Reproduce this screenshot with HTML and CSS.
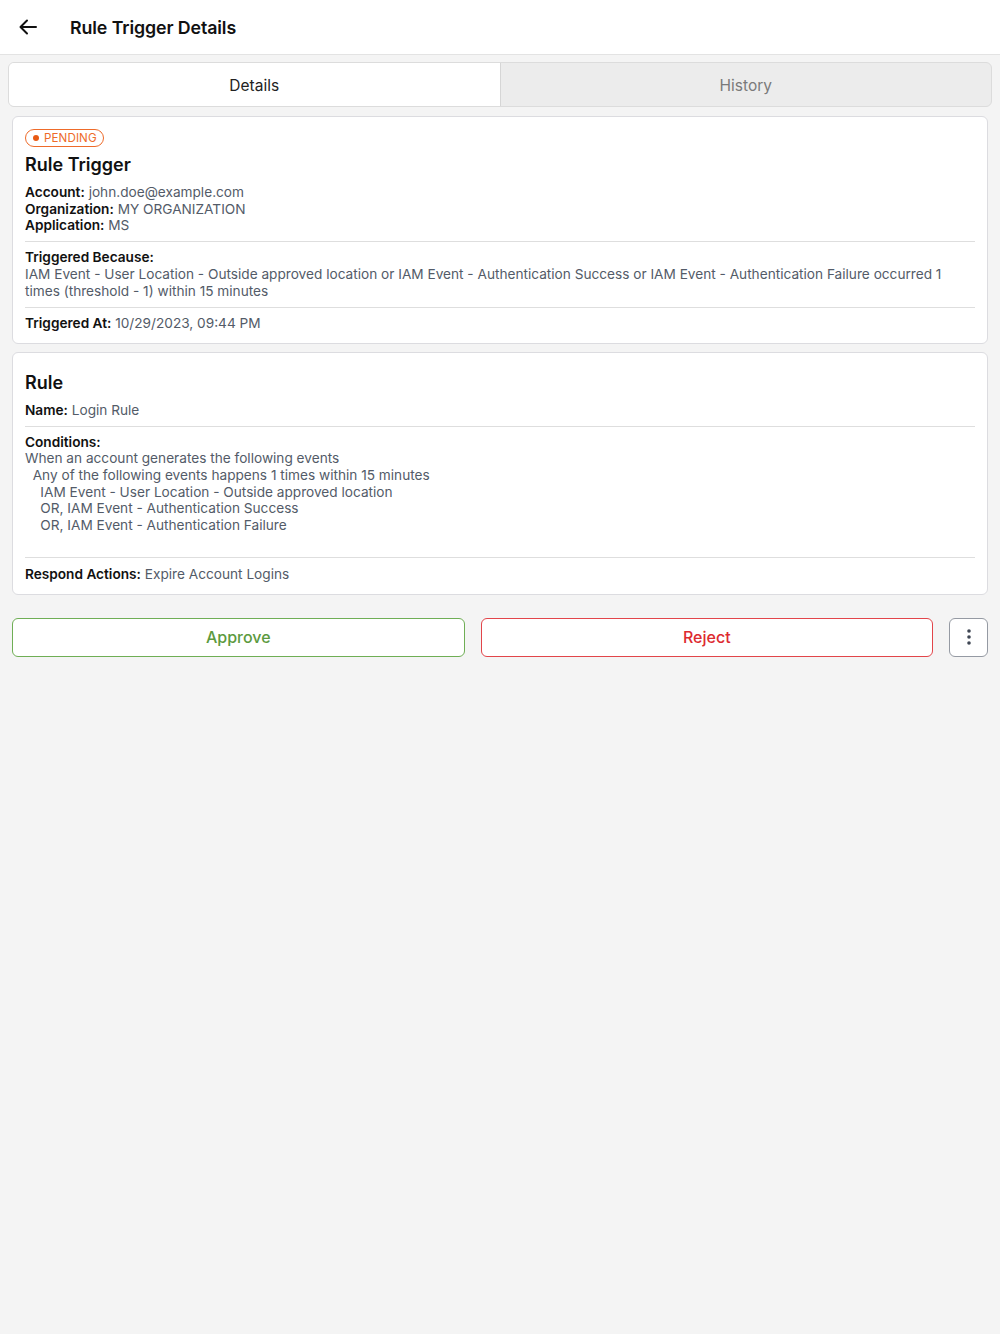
FILE: index.html
```html
<!DOCTYPE html>
<html lang="en">
<head>
<meta charset="utf-8">
<title>Rule Trigger Details</title>
<link rel="stylesheet" href="styles.css">
</head>
<body>
<header class="topbar">
  <button class="back" aria-label="Back">
    <svg width="18" height="16" viewBox="0 0 18 16" fill="none" stroke="#111" stroke-width="2" stroke-linecap="round" stroke-linejoin="round"><path d="M17 8H2M8 1.5L1.5 8 8 14.5"/></svg>
  </button>
  <h1 class="title">Rule Trigger Details</h1>
</header>
<main class="content">
  <div class="tabs">
    <div class="tab active">Details</div>
    <div class="tab">History</div>
  </div>

  <section class="card">
    <span class="badge"><span class="dot"></span>PENDING</span>
    <h2 class="card-title">Rule Trigger</h2>
    <div class="rows">
      <div><b>Account:</b> <span class="val">john.doe@example.com</span></div>
      <div><b>Organization:</b> <span class="val">MY ORGANIZATION</span></div>
      <div><b>Application:</b> <span class="val">MS</span></div>
    </div>
    <hr class="div">
    <div class="rows">
      <div><b>Triggered Because:</b></div>
      <div class="val">IAM Event - User Location - Outside approved location or IAM Event - Authentication Success or IAM Event - Authentication Failure occurred 1 times (threshold - 1) within 15 minutes</div>
    </div>
    <hr class="div div-loose-top">
    <div class="rows">
      <div><b>Triggered At:</b> <span class="val">10/29/2023, 09:44 PM</span></div>
    </div>
  </section>

  <section class="card">
    <h2 class="card-title rule-title">Rule</h2>
    <div class="rows">
      <div><b>Name:</b> <span class="val">Login Rule</span></div>
    </div>
    <hr class="div">
    <div class="rows">
      <div><b>Conditions:</b></div>
      <div class="val cond">When an account generates the following events
  Any of the following events happens 1 times within 15 minutes
    IAM Event - User Location - Outside approved location
    OR, IAM Event - Authentication Success
    OR, IAM Event - Authentication Failure</div>
    </div>
    <hr class="div div-loose-bottom">
    <div class="rows">
      <div><b>Respond Actions:</b> <span class="val">Expire Account Logins</span></div>
    </div>
  </section>

  <div class="actions">
    <button class="btn approve">Approve</button>
    <button class="btn reject">Reject</button>
    <button class="more" aria-label="More">
      <svg width="4" height="16" viewBox="0 0 4 16" fill="#3f4654"><circle cx="2" cy="2" r="1.8"/><circle cx="2" cy="8" r="1.8"/><circle cx="2" cy="14" r="1.8"/></svg>
    </button>
  </div>
</main>
</body>
</html>
```

FILE: styles.css
```css
* { box-sizing: border-box; }
html, body { margin: 0; padding: 0; }
body {
  background: #f4f4f4;
  font-family: Inter, "Noto Sans", sans-serif;
  color: #111;
  min-height: 1334px;
}
.topbar {
  height: 55px;
  background: #fff;
  border-bottom: 1px solid #e3e3e3;
  display: flex;
  align-items: center;
  padding-left: 19px;
}
.back {
  border: 0;
  background: none;
  padding: 0;
  display: flex;
  align-items: center;
  width: 18px;
  height: 18px;
  margin-right: 33px;
}
.title {
  margin: 0;
  font-size: 17.8px;
  font-weight: 600;
  color: #111;
  letter-spacing: -0.1px;
}
.content {
  padding: 7px 8px 0;
}
.tabs {
  display: flex;
  height: 45px;
  border: 1px solid #dcdcdc;
  border-radius: 6px;
  overflow: hidden;
  background: #ececec;
}
.tab {
  flex: 1;
  display: flex;
  align-items: center;
  justify-content: center;
  font-size: 15.5px;
  color: #7a7a7a;
  padding-top: 2px;
}
.tab.active {
  background: #fff;
  color: #222;
  border-right: 1px solid #d6d6d6;
}
.card {
  margin: 9px 4px 0;
  background: #fff;
  border: 1px solid #dcdce0;
  border-radius: 6px;
  padding: 11px 12px 11px;
  font-size: 13.65px;
  line-height: 16.7px;
}
.card + .card { margin-top: 8px; }
.badge {
  display: inline-flex;
  align-items: center;
  height: 18px;
  padding: 0 6px 0 7px;
  border: 1px solid #ee6b2a;
  border-radius: 9px;
  color: #ee6b2a;
  font-size: 11.6px;
  letter-spacing: 0.1px;
}
.dot {
  width: 6px;
  height: 6px;
  border-radius: 50%;
  background: #e85a14;
  margin-right: 5px;
}
.card-title {
  margin: 7px 0 8px;
  font-size: 18px;
  line-height: 22px;
  font-weight: 600;
}
.rule-title {
  margin-top: 8px;
}
.rows b { font-weight: 600; color: #111; }
.val { color: #535b68; }
.cond { white-space: pre-wrap; margin-bottom: 23px; }
.div {
  border: 0;
  border-top: 1px solid #dedede;
  margin: 7px 0 7px;
}
.div-loose-top { margin-top: 8px; }
.div-loose-bottom { margin-bottom: 8px; }
.actions {
  display: flex;
  gap: 16px;
  margin: 23px 4px 0;
  height: 39px;
}
.btn {
  flex: 1;
  background: #fff;
  border-radius: 6px;
  font-family: Inter, "Noto Sans", sans-serif;
  font-size: 16px;
  font-weight: 500;
}
.approve { border: 1px solid #6fae55; color: #5c9a40; }
.reject { border: 1px solid #e2454a; color: #dd2a2f; }
.more {
  width: 39px;
  flex: none;
  background: #fff;
  border: 1px solid #959aa3;
  border-radius: 6px;
  display: flex;
  align-items: center;
  justify-content: center;
  padding: 0;
}
```
